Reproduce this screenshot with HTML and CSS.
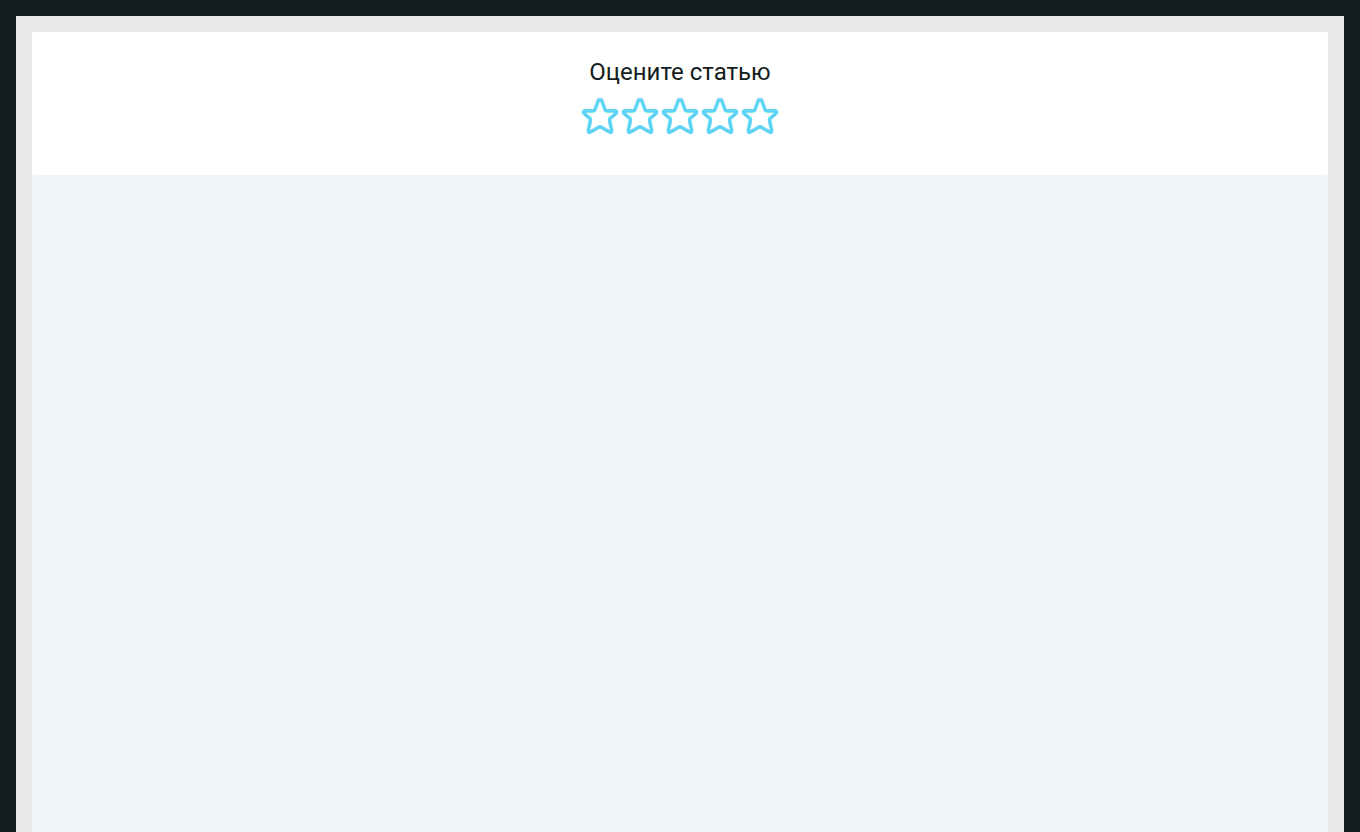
FILE: index.html
```html
<!DOCTYPE html>
<html lang="ru">
<head>
<meta charset="utf-8">
<meta name="viewport" content="width=device-width, initial-scale=1">
<title>Оцените статью</title>
<link rel="stylesheet" href="styles.css">
</head>
<body>
<svg class="sprite" aria-hidden="true">
  <symbol id="star" viewBox="0 0 40 40">
    <path d="M18.3 4.6C19 3.2 21 3.2 21.7 4.6L24.9 13.1Q25.6 14.9 27.5 14.9H35C36.7 14.9 37 16.6 35.8 17.6L30.4 22.1Q29.3 23.1 29.6 24.6L31.6 34.4C31.9 36 30.8 36.8 29.4 36L21.3 31.2Q20 30.4 18.7 31.2L10.6 36C9.2 36.8 8.1 36 8.4 34.4L10.4 24.6Q10.7 23.1 9.6 22.1L4.2 17.6C3 16.6 3.3 14.9 5 14.9H12.5Q14.4 14.9 15.1 13.1Z"/>
  </symbol>
</svg>
<main class="frame">
  <div class="content">
    <section class="card">
      <h1 class="title" id="rating-title">Оцените статью</h1>
      <div class="stars" role="group" aria-labelledby="rating-title">
        <button class="star" type="button" aria-label="1"><svg class="icon"><use href="#star"/></svg></button>
        <button class="star" type="button" aria-label="2"><svg class="icon"><use href="#star"/></svg></button>
        <button class="star" type="button" aria-label="3"><svg class="icon"><use href="#star"/></svg></button>
        <button class="star" type="button" aria-label="4"><svg class="icon"><use href="#star"/></svg></button>
        <button class="star" type="button" aria-label="5"><svg class="icon"><use href="#star"/></svg></button>
      </div>
    </section>
  </div>
</main>
</body>
</html>
```
FILE: styles.css
```css
* {
  box-sizing: border-box;
}

body {
  display: flex;
  flex-direction: column;
  min-height: 100vh;
  margin: 0;
  padding: 16px 16px 0;
  background: #141d20;
  color: #141d20;
  font-family: Roboto, sans-serif;
}

.sprite {
  display: none;
}

.frame {
  display: flex;
  flex: 1;
  flex-direction: column;
  padding: 16px 16px 0;
  background: #e8e8ea;
}

.content {
  flex: 1;
  background: #eef4f7;
}

.card {
  display: flex;
  flex-direction: column;
  align-items: center;
  gap: 8px;
  padding: 24px 16px 39px;
  border-radius: 3px;
  background: #fff;
}

.title {
  margin: 0;
  font-size: 24px;
  font-weight: 400;
  line-height: 32px;
}

.stars {
  display: flex;
}

.star {
  width: 40px;
  height: 40px;
  padding: 0;
  border: 0;
  background: none;
  cursor: pointer;
}

.icon {
  display: block;
  width: 40px;
  height: 40px;
  fill: none;
  stroke: #5fd4f4;
  stroke-width: 3.6;
  stroke-linejoin: round;
}
```
